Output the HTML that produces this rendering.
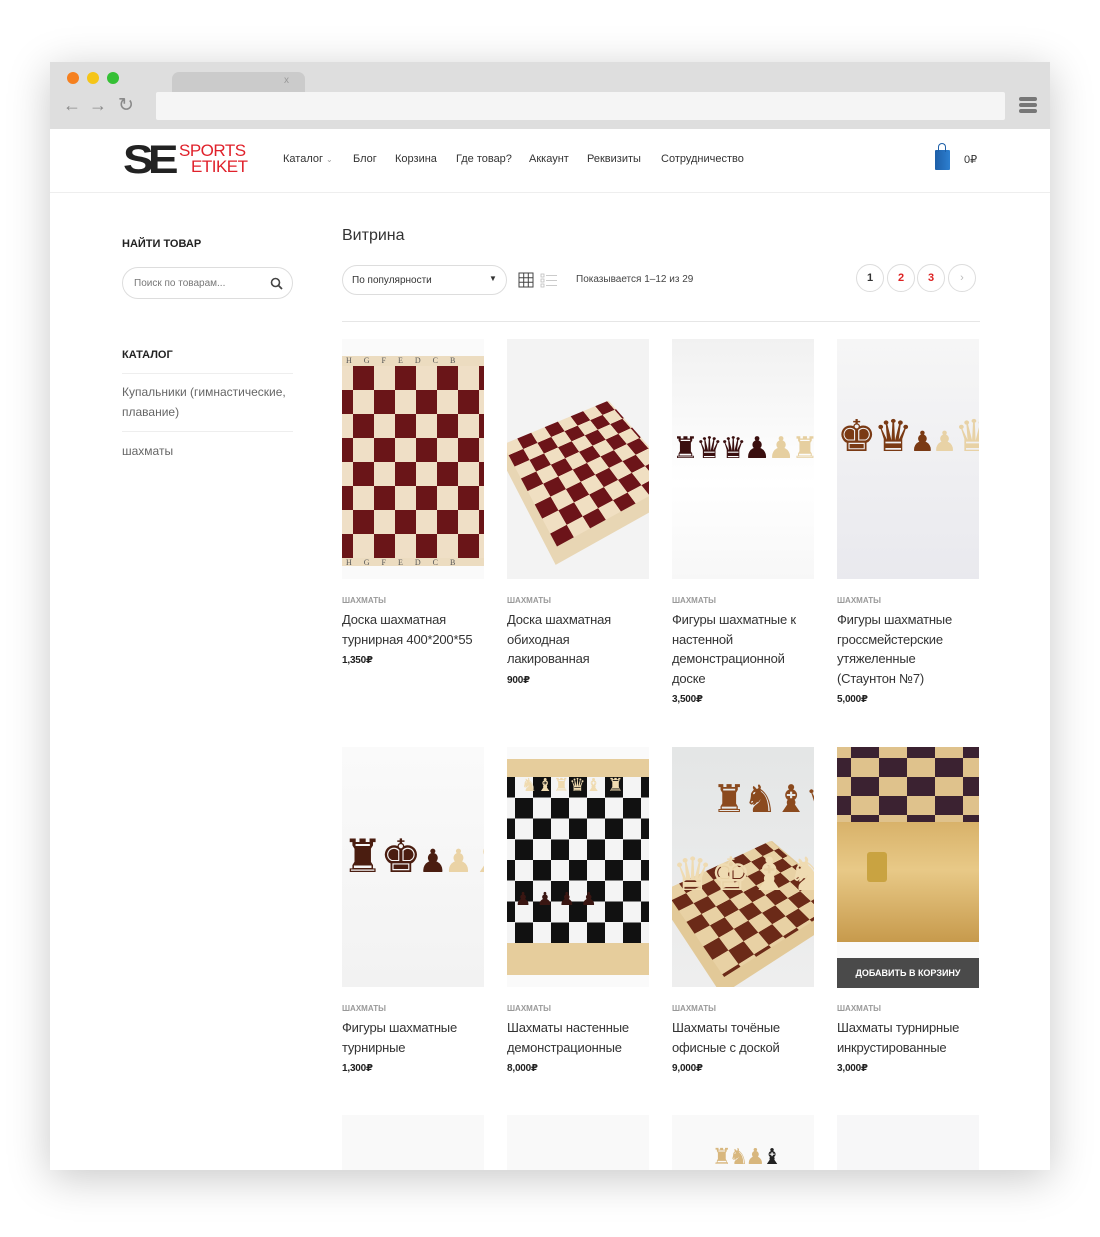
<!DOCTYPE html>
<html><head><meta charset="utf-8">
<style>
*{margin:0;padding:0;box-sizing:border-box}
html,body{width:1100px;height:1237px;overflow:hidden}
body{background:#fff;position:relative;font-family:"Liberation Sans","DejaVu Sans",sans-serif;color:#333}
.frame{position:absolute;left:50px;top:62px;width:1000px;height:1108px;background:#fff;box-shadow:0 8px 40px rgba(0,0,0,.22);overflow:hidden}
.chrome{position:absolute;left:0;top:0;width:1000px;height:67px;background:#dedede}
.dot{position:absolute;top:10px;width:12px;height:12px;border-radius:50%}
.tab{position:absolute;left:122px;top:10px;width:133px;height:22px;background:#cbcbcb;border-radius:7px 7px 0 0}
.url{position:absolute;left:106px;top:30px;width:849px;height:28px;background:#f5f5f5;border-radius:2px}
.a{position:absolute;font-size:18px;color:#8a8a8a;top:33px}
.ham{position:absolute;left:969px;width:18px;height:4px;background:#777;border-radius:2px}
.abs{position:absolute}
.nav{position:absolute;top:91px;font-size:11px;color:#333;white-space:nowrap}
.hdr-line{position:absolute;left:0;top:130px;width:1000px;height:1px;background:#eee}
.h4{font-size:11px;font-weight:bold;color:#222;text-transform:uppercase}
.img{position:absolute;width:142px;height:240px;overflow:hidden}
.cat{position:absolute;font-size:8px;font-weight:bold;color:#999;}
.ttl{position:absolute;font-size:13px;line-height:19.5px;color:#333;width:138px;letter-spacing:-.2px}
.pr{font-size:10px;font-weight:bold;color:#222}
.pg{position:absolute;top:202px;width:28px;height:28px;border:1px solid #ddd;border-radius:50%;font-size:11px;text-align:center;line-height:26px;font-weight:bold}
.pcs{position:absolute;font-family:"DejaVu Sans",sans-serif;white-space:nowrap;letter-spacing:-3px}
</style></head><body>
<div class="frame">
 <div class="chrome">
  <div class="dot" style="left:17px;background:#f5801f"></div>
  <div class="dot" style="left:37px;background:#f5c518"></div>
  <div class="dot" style="left:57px;background:#35c035"></div>
  <div class="tab"><span style="position:absolute;left:112px;top:3px;font-size:10px;color:#999">x</span></div>
  <div class="url"></div>
  <span class="a" style="left:13px">&#8592;</span><span class="a" style="left:39px">&#8594;</span><span class="a" style="left:68px;font-size:19px;top:32px">&#8635;</span>
  <div class="ham" style="top:35px"></div><div class="ham" style="top:41px"></div><div class="ham" style="top:47px"></div>
 </div>
 <div class="abs" style="left:73px;top:80px;width:56px;height:36px;font:900 40px/36px 'Liberation Sans',sans-serif;color:#222;letter-spacing:-5px;transform:scaleX(1.15);transform-origin:left">SE</div>
 <div class="abs" style="left:129px;top:81px;font-size:17px;line-height:16px;color:#e0212b;letter-spacing:-.5px">SPORTS<br><span style="margin-left:12px">ETIKET</span></div>
 <div class="nav" style="left:233px">Каталог <span style="color:#999;font-size:8px">&#8964;</span></div>
 <div class="nav" style="left:303px">Блог</div>
 <div class="nav" style="left:345px">Корзина</div>
 <div class="nav" style="left:406px">Где товар?</div>
 <div class="nav" style="left:479px">Аккаунт</div>
 <div class="nav" style="left:537px">Реквизиты</div>
 <div class="nav" style="left:611px">Сотрудничество</div>
 <div class="abs" style="left:885px;top:88px;width:15px;height:20px;background:linear-gradient(90deg,#1d5fa8,#2d7fd0);border-radius:1px"></div>
 <div class="abs" style="left:888px;top:81px;width:8px;height:9px;border:1.5px solid #1d5fa8;border-bottom:none;border-radius:4px 4px 0 0"></div>
 <div class="nav" style="left:914px;top:91px">0&#8381;</div>
 <div class="hdr-line"></div>
 <div class="abs h4" style="left:72px;top:176px">Найти товар</div>
 <div class="abs" style="left:72px;top:205px;width:171px;height:32px;border:1px solid #ddd;border-radius:16px"><span style="position:absolute;left:11px;top:10px;font-size:10px;color:#777">Поиск по товарам...</span>
  <svg style="position:absolute;left:147px;top:9px" width="13" height="13" viewBox="0 0 13 13"><circle cx="5.5" cy="5.5" r="4" fill="none" stroke="#444" stroke-width="1.6"/><path d="M8.5 8.5L12 12" stroke="#444" stroke-width="1.8"/></svg></div>
 <div class="abs h4" style="left:72px;top:287px">Каталог</div>
 <div class="abs" style="left:72px;top:311px;width:171px;height:1px;background:#eee"></div>
 <div class="abs" style="left:72px;top:321px;font-size:12px;line-height:19.5px;color:#666">Купальники (гимнастические,<br>плавание)</div>
 <div class="abs" style="left:72px;top:369px;width:171px;height:1px;background:#eee"></div>
 <div class="abs" style="left:72px;top:382px;font-size:12px;color:#666">шахматы</div>
 <div class="abs" style="left:292px;top:165px;font-size:16px;color:#333">Витрина</div>
 <div class="abs" style="left:292px;top:203px;width:165px;height:30px;border:1px solid #ddd;border-radius:15px"><span style="position:absolute;left:9px;top:9px;font-size:10px;color:#333">По популярности</span><span style="position:absolute;left:146px;top:8px;font-size:8px">&#9660;</span></div>
 <svg class="abs" style="left:468px;top:210px" width="16" height="16" viewBox="0 0 16 16"><path d="M1 1h14v14H1zM1 5.7h14M1 10.3h14M5.7 1v14M10.3 1v14" fill="none" stroke="#444" stroke-width="1"/></svg>
 <svg class="abs" style="left:490px;top:210px" width="18" height="16" viewBox="0 0 18 16"><path d="M1 2h3v3H1zM1 7h3v3H1zM1 12h3v3H1zM6 3.5h11M6 8.5h11M6 13.5h11" fill="none" stroke="#bbb" stroke-width=".8"/></svg>
 <div class="abs" style="left:526px;top:212px;font-size:10px;color:#444">Показывается 1–12 из 29</div>
 <div class="pg" style="left:806px;color:#333">1</div>
 <div class="pg" style="left:837px;color:#d22">2</div>
 <div class="pg" style="left:867px;color:#d22">3</div>
 <div class="pg" style="left:898px;color:#bbb;font-weight:normal">&#8250;</div>
 <div class="abs" style="left:292px;top:259px;width:638px;height:1px;background:#e6e6e6"></div>

 <div class="img" style="left:292px;top:277px;background:#fafafa">
  <div class="abs" style="left:0;top:17px;width:142px;height:210px;background:#ecdcc0"></div>
  <div class="abs" style="left:0;top:27px;width:142px;height:192px;background:repeating-conic-gradient(#6a1518 0 25%,#efdfc6 0 50%) -10px 0/42px 48px"></div>
  <div class="abs" style="left:4px;top:17px;font:8px serif;letter-spacing:12px;color:#555">HGFEDCB</div>
  <div class="abs" style="left:4px;top:219px;font:8px serif;letter-spacing:12px;color:#555">HGFEDCB</div>
 </div>
 <div class="img" style="left:457px;top:277px;background:#f3f3f3">
  <div class="abs" style="left:10px;top:60px;width:140px;height:140px;background:#e8d6b4;transform:perspective(300px) rotateX(35deg) rotateZ(-30deg)"></div>
  <div class="abs" style="left:15px;top:60px;width:130px;height:125px;background:repeating-conic-gradient(#6c1419 0 25%,#f0dfc2 0 50%) 0 0/32px 32px;transform:perspective(300px) rotateX(35deg) rotateZ(-30deg)"></div>
 </div>
 <div class="img" style="left:622px;top:277px;background:linear-gradient(#f1f1f1,#fff 60%,#f7f7f7)">
  <div class="pcs" style="left:0;top:92px;font-size:30px;color:#3a0f0f">&#9820;&#9819;&#9819;&#9823;<span style="color:#e6cfa0">&#9823;&#9820;&#9819;</span></div>
 </div>
 <div class="img" style="left:787px;top:277px;background:linear-gradient(#f6f6f6,#e9e9ee)">
  <div class="pcs" style="left:0;top:72px;font-size:44px;color:#7a3a14">&#9818;&#9819;<span style="font-size:28px">&#9823;</span><span style="color:#e8d2a6"><span style="font-size:28px">&#9823;</span>&#9819;&#9818;</span></div>
 </div>
 <div class="cat" style="left:292px;top:534px">ШАХМАТЫ</div>
 <div class="ttl" style="left:292px;top:548px">Доска шахматная турнирная 400*200*55<br><span class="pr">1,350&#8381;</span></div>
 <div class="cat" style="left:457px;top:534px">ШАХМАТЫ</div>
 <div class="ttl" style="left:457px;top:548px">Доска шахматная обиходная лакированная<br><span class="pr">900&#8381;</span></div>
 <div class="cat" style="left:622px;top:534px">ШАХМАТЫ</div>
 <div class="ttl" style="left:622px;top:548px">Фигуры шахматные к настенной демонстрационной доске<br><span class="pr">3,500&#8381;</span></div>
 <div class="cat" style="left:787px;top:534px">ШАХМАТЫ</div>
 <div class="ttl" style="left:787px;top:548px">Фигуры шахматные гроссмейстерские утяжеленные (Стаунтон №7)<br><span class="pr">5,000&#8381;</span></div>

 <div class="img" style="left:292px;top:685px;background:linear-gradient(#fafafa,#f2f2f2)">
  <div class="pcs" style="left:0;top:82px;font-size:46px;color:#4a1d10">&#9820;&#9818;<span style="font-size:32px">&#9823;</span><span style="color:#ead3a6"><span style="font-size:32px">&#9823;</span>&#9821;&#9818;</span></div>
 </div>
 <div class="img" style="left:457px;top:685px;background:#fafafa">
  <div class="abs" style="left:0;top:12px;width:142px;height:216px;background:#e6cd9c"></div>
  <div class="abs" style="left:0;top:30px;width:142px;height:166px;background:repeating-conic-gradient(#111 0 25%,#f4f4f4 0 50%) 8px 0/36px 41.5px"></div>
  <div class="pcs" style="left:14px;top:28px;font-size:18px;color:#f0dbb0;letter-spacing:0">&#9822;&#9821;&#9820;&#9819;&#9821; &#9820;</div>
  <div class="pcs" style="left:8px;top:142px;font-size:18px;color:#3a1612;letter-spacing:0">&#9823; &#9823;   &#9823;  &#9823;</div>
 </div>
 <div class="img" style="left:622px;top:685px;background:linear-gradient(#e4e6e6,#eee)">
  <div class="abs" style="left:5px;top:90px;width:150px;height:130px;background:#e2c998;transform:perspective(300px) rotateX(40deg) rotateZ(-35deg)"></div>
  <div class="abs" style="left:12px;top:92px;width:135px;height:115px;background:repeating-conic-gradient(#6b2a18 0 25%,#e8d1a4 0 50%) 0 0/32px 32px;transform:perspective(300px) rotateX(40deg) rotateZ(-35deg)"></div>
  <div class="pcs" style="left:40px;top:30px;font-size:38px;color:#8b4a1e">&#9820;&#9822;&#9821;&#9819;&#9818;</div>
  <div class="pcs" style="left:0px;top:100px;font-size:46px;color:#efdbb2">&#9819;&#9818;&#9821;&#9822;&#9823;</div>
 </div>
 <div class="img" style="left:787px;top:685px;background:#fafafa">
  <div class="abs" style="left:0;top:0;width:142px;height:75px;background:repeating-conic-gradient(#3b2231 0 25%,#dfc28c 0 50%) -14px -8px/56px 38px"></div>
  <div class="abs" style="left:0;top:75px;width:142px;height:120px;background:linear-gradient(#d8b26a,#e8c987 40%,#c79a4c)"></div>
  <div class="abs" style="left:30px;top:105px;width:20px;height:30px;background:#c9a341;border-radius:3px"></div>
 </div>
 <div class="abs" style="left:787px;top:896px;width:142px;height:30px;background:#4a4a4a;color:#fff;font-size:9px;font-weight:bold;text-align:center;line-height:30px">ДОБАВИТЬ В КОРЗИНУ</div>
 <div class="cat" style="left:292px;top:942px">ШАХМАТЫ</div>
 <div class="ttl" style="left:292px;top:956px">Фигуры шахматные турнирные<br><span class="pr">1,300&#8381;</span></div>
 <div class="cat" style="left:457px;top:942px">ШАХМАТЫ</div>
 <div class="ttl" style="left:457px;top:956px">Шахматы настенные демонстрационные<br><span class="pr">8,000&#8381;</span></div>
 <div class="cat" style="left:622px;top:942px">ШАХМАТЫ</div>
 <div class="ttl" style="left:622px;top:956px">Шахматы точёные офисные с доской<br><span class="pr">9,000&#8381;</span></div>
 <div class="cat" style="left:787px;top:942px">ШАХМАТЫ</div>
 <div class="ttl" style="left:787px;top:956px">Шахматы турнирные инкрустированные<br><span class="pr">3,000&#8381;</span></div>

 <div class="img" style="left:292px;top:1053px;height:55px;background:#f9f9f9"></div>
 <div class="img" style="left:457px;top:1053px;height:55px;background:#f9f9f9"></div>
 <div class="img" style="left:622px;top:1053px;height:55px;background:#f9f9f9"><div class="pcs" style="left:40px;top:30px;font-size:22px;color:#d8b77e">&#9820;&#9822;&#9823;<span style="color:#222">&#9821;</span></div></div>
 <div class="img" style="left:787px;top:1053px;height:55px;background:#f7f7f8"></div>
</div>
</body></html>
